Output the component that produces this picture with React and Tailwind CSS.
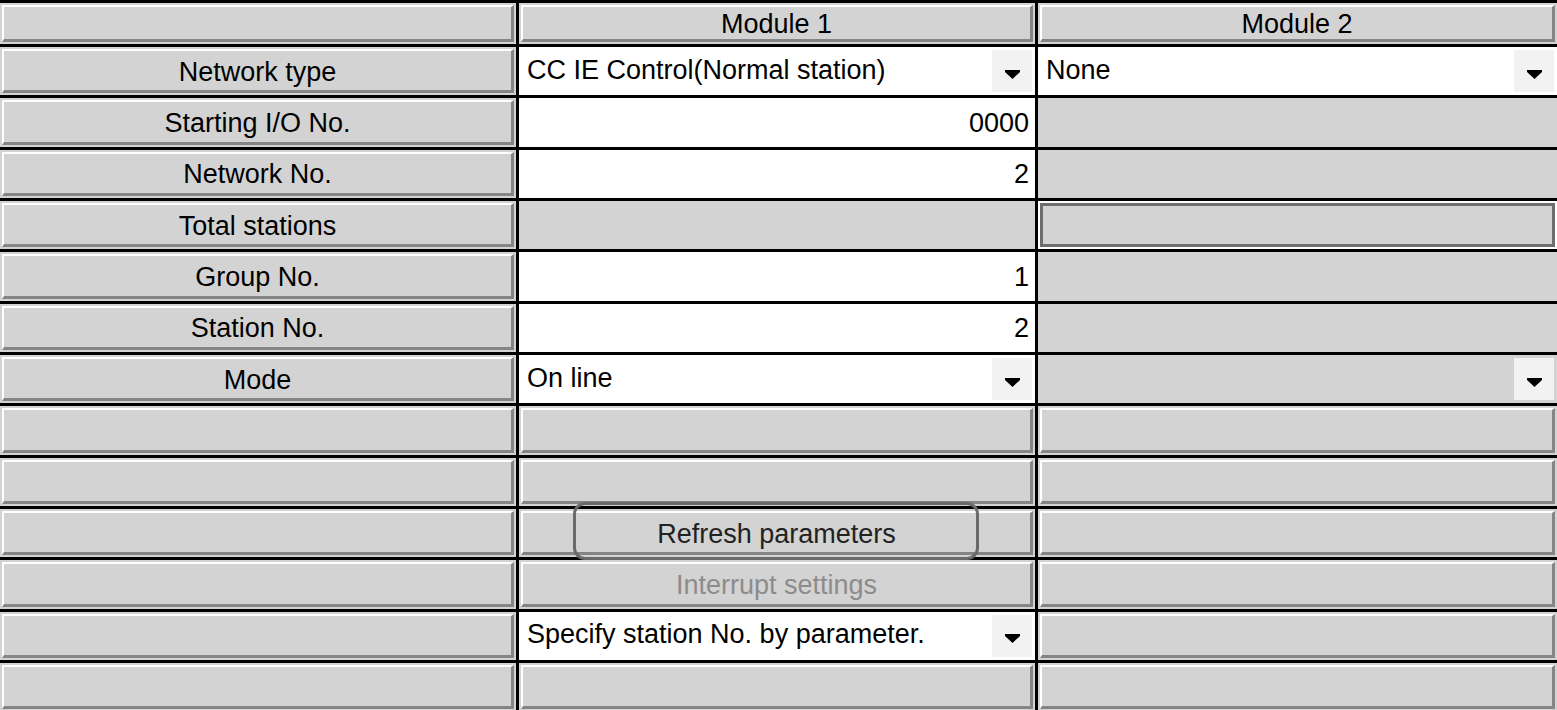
import React from 'react';

const font = { fontFamily: '"Liberation Sans", Arial, sans-serif' };

const rows = [
    { label: 'Network type', m1: { kind: 'select', value: 'CC IE Control(Normal station)' }, m2: { kind: 'select', value: 'None' } },
    { label: 'Starting I/O No.', m1: { kind: 'input', value: '0000' }, m2: { kind: 'flat' } },
    { label: 'Network No.', m1: { kind: 'input', value: '2' }, m2: { kind: 'flat' } },
    { label: 'Total stations', m1: { kind: 'flat' }, m2: { kind: 'sunken' } },
    { label: 'Group No.', m1: { kind: 'input', value: '1' }, m2: { kind: 'flat' } },
    { label: 'Station No.', m1: { kind: 'input', value: '2' }, m2: { kind: 'flat' } },
    { label: 'Mode', m1: { kind: 'select', value: 'On line' }, m2: { kind: 'select', value: '', gray: true } },
    { label: '', m1: { kind: 'button' }, m2: { kind: 'button' } },
    { label: '', m1: { kind: 'button' }, m2: { kind: 'button' } },
    { label: '', m1: { kind: 'button', value: 'Refresh parameters', focus: true }, m2: { kind: 'button' } },
    { label: '', m1: { kind: 'button', value: 'Interrupt settings', disabled: true }, m2: { kind: 'button' } },
    { label: '', m1: { kind: 'select', value: 'Specify station No. by parameter.' }, m2: { kind: 'button' } },
    { label: '', m1: { kind: 'button' }, m2: { kind: 'button' } },
];

// raised 3D face, like an old Win32 grid header
const Bevel = ({ children, className = '' }) => (
    <div className="h-full w-full bg-[#d3d3d3] p-[2px]">
        <div className={`h-full w-full bg-[#d3d3d3] border-t-2 border-l-2 border-t-white border-l-white border-b-[3px] border-r-[3px] border-b-[#858585] border-r-[#858585] flex items-center justify-center pt-[3px] ${className}`}>
            {children}
        </div>
    </div>
);

const Arrow = () => (
    <svg width="15" height="9" viewBox="0 0 15 9">
        <polygon points="0,0 15,0 15,2 7.5,9 0,2" fill="#000" />
    </svg>
);

const Cell = ({ cell }) => {
    if (cell.kind === 'select') {
        return (
            <div className={`h-full w-full flex items-center ${cell.gray ? 'bg-[#d3d3d3]' : 'bg-white'}`}>
                <span className="flex-1 pl-[8px] pb-[2px] text-[27px] text-black leading-none whitespace-nowrap">{cell.value}</span>
                <div className="h-full py-[3px] pr-[3px]">
                    <div className="h-full w-[40px] bg-[#f2f2f2] flex items-center justify-center pt-[6px]">
                        <Arrow />
                    </div>
                </div>
            </div>
        );
    }
    if (cell.kind === 'input') {
        return (
            <div className="h-full w-full bg-white flex items-center justify-end pr-[6px] pt-[2px] text-[27px] text-black leading-none">
                {cell.value}
            </div>
        );
    }
    if (cell.kind === 'flat') {
        return <div className="h-full w-full bg-[#d3d3d3]" />;
    }
    if (cell.kind === 'sunken') {
        return (
            <div className="h-full w-full bg-white p-[2px]">
                <div className="h-full w-full bg-[#d3d3d3] border-[3px] border-[#6e6e6e]" />
            </div>
        );
    }
    return (
        <div className="relative h-full w-full">
            <Bevel>
                {cell.value && (
                    <span className={`text-[27px] leading-none whitespace-nowrap ${cell.disabled ? 'text-[#8c8c8c]' : 'text-[#222]'}`}>
                        {cell.value}
                    </span>
                )}
            </Bevel>
            {cell.focus && (
                <div className="absolute left-[54px] right-[56px] top-[-7px] bottom-[-3px] rounded-[12px] border-[3px] border-[#6a6a6a] pointer-events-none" />
            )}
        </div>
    );
};

export default function App() {
    return (
        <div style={font} className="w-[1557px] h-[710px] overflow-hidden bg-black pt-[3px]">
            <div className="grid grid-cols-[516px_516px_519px] grid-rows-[41px_repeat(13,48.33px)] gap-x-[3px] gap-y-[3px]">
                <Bevel />
                <Bevel><span className="text-[27px] leading-none text-black">Module 1</span></Bevel>
                <Bevel><span className="text-[27px] leading-none text-black">Module 2</span></Bevel>

                {rows.map((r, i) => (
                    <React.Fragment key={i}>
                        <Bevel>
                            {r.label && <span className="text-[27px] leading-none text-black whitespace-nowrap">{r.label}</span>}
                        </Bevel>
                        <Cell cell={r.m1} />
                        <Cell cell={r.m2} />
                    </React.Fragment>
                ))}
            </div>
        </div>
    );
}
